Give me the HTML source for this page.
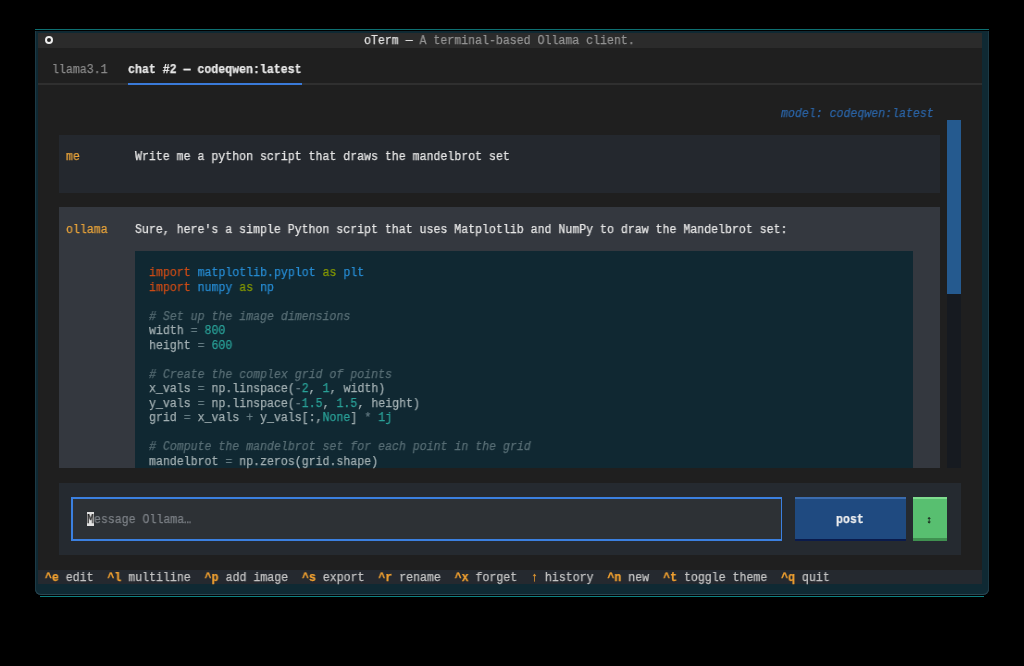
<!DOCTYPE html>
<html><head><meta charset="utf-8"><style>
html,body{margin:0;padding:0;}
body{width:1024px;height:666px;background:#000;position:relative;overflow:hidden;font-family:"Liberation Mono",monospace;}
div,p{position:absolute;margin:0;}
p{white-space:pre;font-size:12.5px;line-height:14.5px;height:14.5px;transform-origin:0 0;transform:scaleX(0.92547);will-change:transform;-webkit-font-smoothing:antialiased;-webkit-text-stroke:0.25px currentColor;}
</style></head><body>
<div style="left:35.00px;top:29.00px;width:954.00px;height:1.00px;background:#0e7072;"></div>
<div style="left:35.00px;top:31.00px;width:954.00px;height:564.00px;background:#0f2933;border-radius:0 0 6px 6px;box-shadow:inset 0 -1px 0 #2a4652, inset -1px 0 0 #1d3a45, inset 1px 0 0 #1d3a45;"></div>
<div style="left:40.00px;top:596.00px;width:944.00px;height:1.00px;background:#0e8082;"></div>
<div style="left:38.00px;top:33.00px;width:944.00px;height:14.50px;background:#2b2b2b;"></div>
<div style="left:38.00px;top:47.50px;width:944.00px;height:522.00px;background:#1f1f1f;"></div>
<div style="left:44.50px;top:35.70px;width:4.4px;height:4.4px;border:2px solid #ececec;border-radius:50%;background:#222;"></div>
<p style="left:364.23px;top:34.00px;"><span style="color:#e4e4e4">oTerm —</span><span style="color:#949494"> A terminal-based Ollama client.</span></p>
<p style="left:51.88px;top:63.00px;"><span style="color:#8a8a8a">llama3.1</span></p>
<p style="left:128.23px;top:63.00px;"><span style="color:#e8e8e8;font-weight:bold">chat #2 — codeqwen:latest</span></p>
<div style="left:38.00px;top:83.00px;width:944.00px;height:2.00px;background:#2f2f2f;"></div>
<div style="left:128.23px;top:83.20px;width:173.52px;height:2.00px;background:#3a7ad8;"></div>
<p style="left:780.69px;top:106.50px;"><span style="color:#2b64a6;font-style:italic">model: codeqwen:latest</span></p>
<div style="left:947.27px;top:120.00px;width:13.88px;height:348.00px;background:#161a20;"></div>
<div style="left:947.27px;top:120.00px;width:13.88px;height:174.00px;background:#255a8f;"></div>
<div style="left:58.82px;top:134.50px;width:881.51px;height:58.00px;background:#24282e;"></div>
<p style="left:65.76px;top:150.00px;"><span style="color:#e8a33a">me</span></p>
<p style="left:135.17px;top:150.00px;"><span style="color:#e6e6e6">Write me a python script that draws the mandelbrot set</span></p>
<div style="left:58.82px;top:207.00px;width:881.51px;height:261.00px;background:#34383f;"></div>
<p style="left:65.76px;top:222.50px;"><span style="color:#e8a33a">ollama</span></p>
<p style="left:135.17px;top:222.50px;"><span style="color:#e6e6e6">Sure, here's a simple Python script that uses Matplotlib and NumPy to draw the Mandelbrot set:</span></p>
<div style="left:135.17px;top:250.50px;width:777.39px;height:217.50px;background:#102832;"></div>
<p style="left:149.06px;top:266.00px;"><span style="color:#cb4b16">import</span> <span style="color:#268bd2">matplotlib.pyplot</span> <span style="color:#859900">as</span> <span style="color:#268bd2">plt</span></p>
<p style="left:149.06px;top:280.50px;"><span style="color:#cb4b16">import</span> <span style="color:#268bd2">numpy</span> <span style="color:#859900">as</span> <span style="color:#268bd2">np</span></p>
<p style="left:149.06px;top:309.50px;"><span style="color:#586e75;font-style:italic"># Set up the image dimensions</span></p>
<p style="left:149.06px;top:324.00px;"><span style="color:#a3b0b3">width </span><span style="color:#657b83">=</span> <span style="color:#2aa198">800</span></p>
<p style="left:149.06px;top:338.50px;"><span style="color:#a3b0b3">height </span><span style="color:#657b83">=</span> <span style="color:#2aa198">600</span></p>
<p style="left:149.06px;top:367.50px;"><span style="color:#586e75;font-style:italic"># Create the complex grid of points</span></p>
<p style="left:149.06px;top:382.00px;"><span style="color:#a3b0b3">x_vals </span><span style="color:#657b83">=</span><span style="color:#a3b0b3"> np.linspace(</span><span style="color:#657b83">-</span><span style="color:#2aa198">2</span><span style="color:#a3b0b3">, </span><span style="color:#2aa198">1</span><span style="color:#a3b0b3">, width)</span></p>
<p style="left:149.06px;top:396.50px;"><span style="color:#a3b0b3">y_vals </span><span style="color:#657b83">=</span><span style="color:#a3b0b3"> np.linspace(</span><span style="color:#657b83">-</span><span style="color:#2aa198">1.5</span><span style="color:#a3b0b3">, </span><span style="color:#2aa198">1.5</span><span style="color:#a3b0b3">, height)</span></p>
<p style="left:149.06px;top:411.00px;"><span style="color:#a3b0b3">grid </span><span style="color:#657b83">=</span><span style="color:#a3b0b3"> x_vals </span><span style="color:#657b83">+</span><span style="color:#a3b0b3"> y_vals[:,</span><span style="color:#2aa198">None</span><span style="color:#a3b0b3">]</span> <span style="color:#657b83">*</span> <span style="color:#2aa198">1j</span></p>
<p style="left:149.06px;top:440.00px;"><span style="color:#586e75;font-style:italic"># Compute the mandelbrot set for each point in the grid</span></p>
<p style="left:149.06px;top:454.50px;"><span style="color:#a3b0b3">mandelbrot </span><span style="color:#657b83">=</span><span style="color:#a3b0b3"> np.zeros(grid.shape)</span></p>
<div style="left:58.82px;top:482.50px;width:902.33px;height:72.50px;background:#252a30;"></div>
<div style="left:70.97px;top:497.00px;width:711.45px;height:43.50px;background:#2d3135;"></div>
<div style="left:70.97px;top:497.00px;width:711.45px;height:2.00px;background:#3b80e0;"></div>
<div style="left:70.97px;top:538.50px;width:711.45px;height:2.00px;background:#3b80e0;"></div>
<div style="left:70.97px;top:497.00px;width:1.74px;height:43.50px;background:#3b80e0;"></div>
<div style="left:780.69px;top:497.00px;width:1.74px;height:43.50px;background:#3b80e0;"></div>
<div style="left:86.59px;top:511.50px;width:6.94px;height:14.50px;background:#e0e0e0;"></div>
<p style="left:86.59px;top:512.50px;"><span style="color:#1e1e1e">M</span><span style="color:#7c8086">essage Ollama…</span></p>
<div style="left:794.57px;top:497.00px;width:111.06px;height:43.50px;background:#1f4a80;"></div>
<div style="left:794.57px;top:497.00px;width:111.06px;height:2.00px;background:#3b6cae;"></div>
<div style="left:794.57px;top:538.50px;width:111.06px;height:2.00px;background:#0a1b4c;"></div>
<p style="left:836.22px;top:512.50px;"><span style="color:#f0f0f0;font-weight:bold">post</span></p>
<div style="left:912.57px;top:497.00px;width:34.70px;height:43.50px;background:#58bf70;"></div>
<div style="left:912.57px;top:497.00px;width:34.70px;height:2.00px;background:#7fdc8f;"></div>
<div style="left:912.57px;top:538.00px;width:34.70px;height:2.50px;background:#3f9050;"></div>
<p style="left:926.45px;top:512.50px;"><span style="color:#111;font-weight:bold;font-size:10.5px">↕</span></p>
<div style="left:38.00px;top:569.50px;width:944.00px;height:14.50px;background:#25292f;"></div>
<p style="left:38.00px;top:570.50px;"> <span style="color:#f0a030;font-weight:bold">^e</span><span style="color:#c4c4c4"> edit</span>  <span style="color:#f0a030;font-weight:bold">^l</span><span style="color:#c4c4c4"> multiline</span>  <span style="color:#f0a030;font-weight:bold">^p</span><span style="color:#c4c4c4"> add image</span>  <span style="color:#f0a030;font-weight:bold">^s</span><span style="color:#c4c4c4"> export</span>  <span style="color:#f0a030;font-weight:bold">^r</span><span style="color:#c4c4c4"> rename</span>  <span style="color:#f0a030;font-weight:bold">^x</span><span style="color:#c4c4c4"> forget</span>  <span style="color:#f0a030;font-weight:bold">↑</span><span style="color:#c4c4c4"> history</span>  <span style="color:#f0a030;font-weight:bold">^n</span><span style="color:#c4c4c4"> new</span>  <span style="color:#f0a030;font-weight:bold">^t</span><span style="color:#c4c4c4"> toggle theme</span>  <span style="color:#f0a030;font-weight:bold">^q</span><span style="color:#c4c4c4"> quit</span>  </p>
</body></html>
